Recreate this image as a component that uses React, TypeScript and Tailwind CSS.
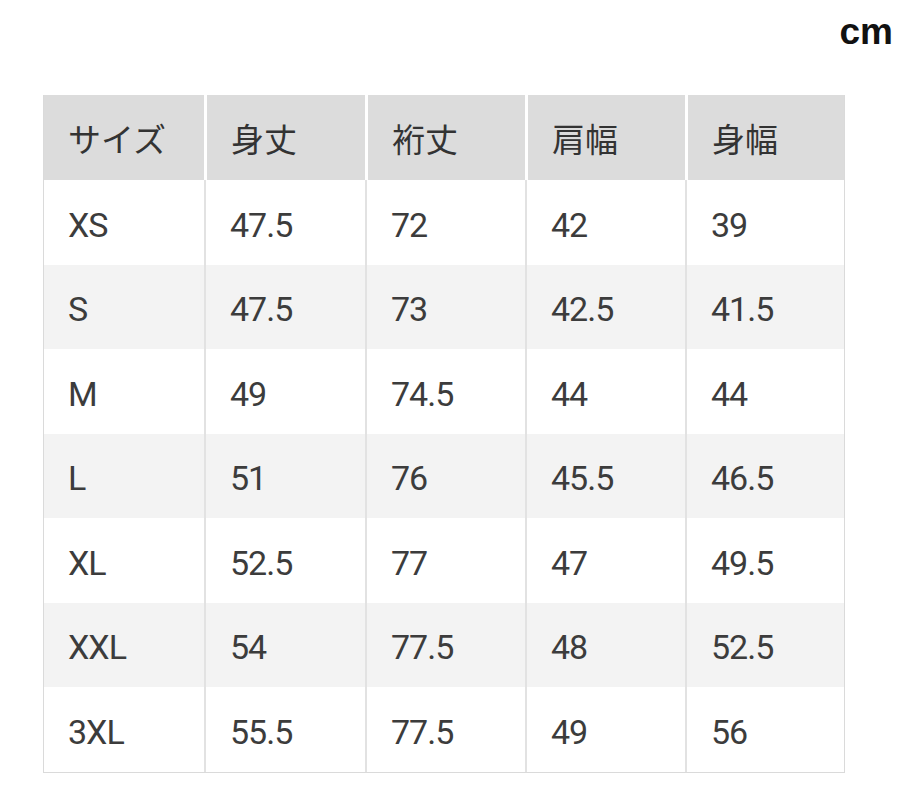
import React from "react";

const headers = ["サイズ", "身丈", "裄丈", "肩幅", "身幅"];
const rows = [
  ["XS", "47.5", "72", "42", "39"],
  ["S", "47.5", "73", "42.5", "41.5"],
  ["M", "49", "74.5", "44", "44"],
  ["L", "51", "76", "45.5", "46.5"],
  ["XL", "52.5", "77", "47", "49.5"],
  ["XXL", "54", "77.5", "48", "52.5"],
  ["3XL", "55.5", "77.5", "49", "56"],
];

export default function App() {
  return (
    <div
      className="w-[924px] h-[798px] bg-white relative"
      style={{ fontFamily: "Roboto, 'Noto Sans CJK JP', sans-serif" }}
    >
      <div className="flex justify-end pr-[31px] pt-[12px] h-[95px]">
        <span
          className="text-[37px] font-bold text-[#111] leading-[40px]"
          style={{ fontFamily: "'Liberation Sans', Arial, sans-serif" }}
        >
          cm
        </span>
      </div>
      <div className="ml-[43px] w-[802px] border-l border-r border-b border-[#dadada]">
        <div className="grid grid-cols-[160px_161px_160px_160px_161px] h-[85px] bg-[#dcdcdc]">
          {headers.map((h, i) => (
            <div
              key={i}
              className={`flex items-center pl-[24px] pt-[2px] text-[33px] text-[#333] ${
                i > 0 ? "border-l-[3px] border-white" : ""
              }`}
              style={{ fontFamily: "'Noto Sans CJK JP', sans-serif" }}
            >
              {h}
            </div>
          ))}
        </div>
        {rows.map((r, ri) => (
          <div
            key={ri}
            className={`grid grid-cols-[160px_161px_160px_160px_161px] h-[84.5px] ${
              ri % 2 === 1 ? "bg-[#f3f3f3]" : "bg-white"
            }`}
          >
            {r.map((c, ci) => (
              <div
                key={ci}
                className={`flex items-center pl-[24px] pt-[6px] text-[34px] tracking-[-1px] text-[#3c3c3c] ${
                  ci > 0 ? "border-l-2 border-[#e2e2e2]" : ""
                }`}
              >
                {c}
              </div>
            ))}
          </div>
        ))}
      </div>
    </div>
  );
}
